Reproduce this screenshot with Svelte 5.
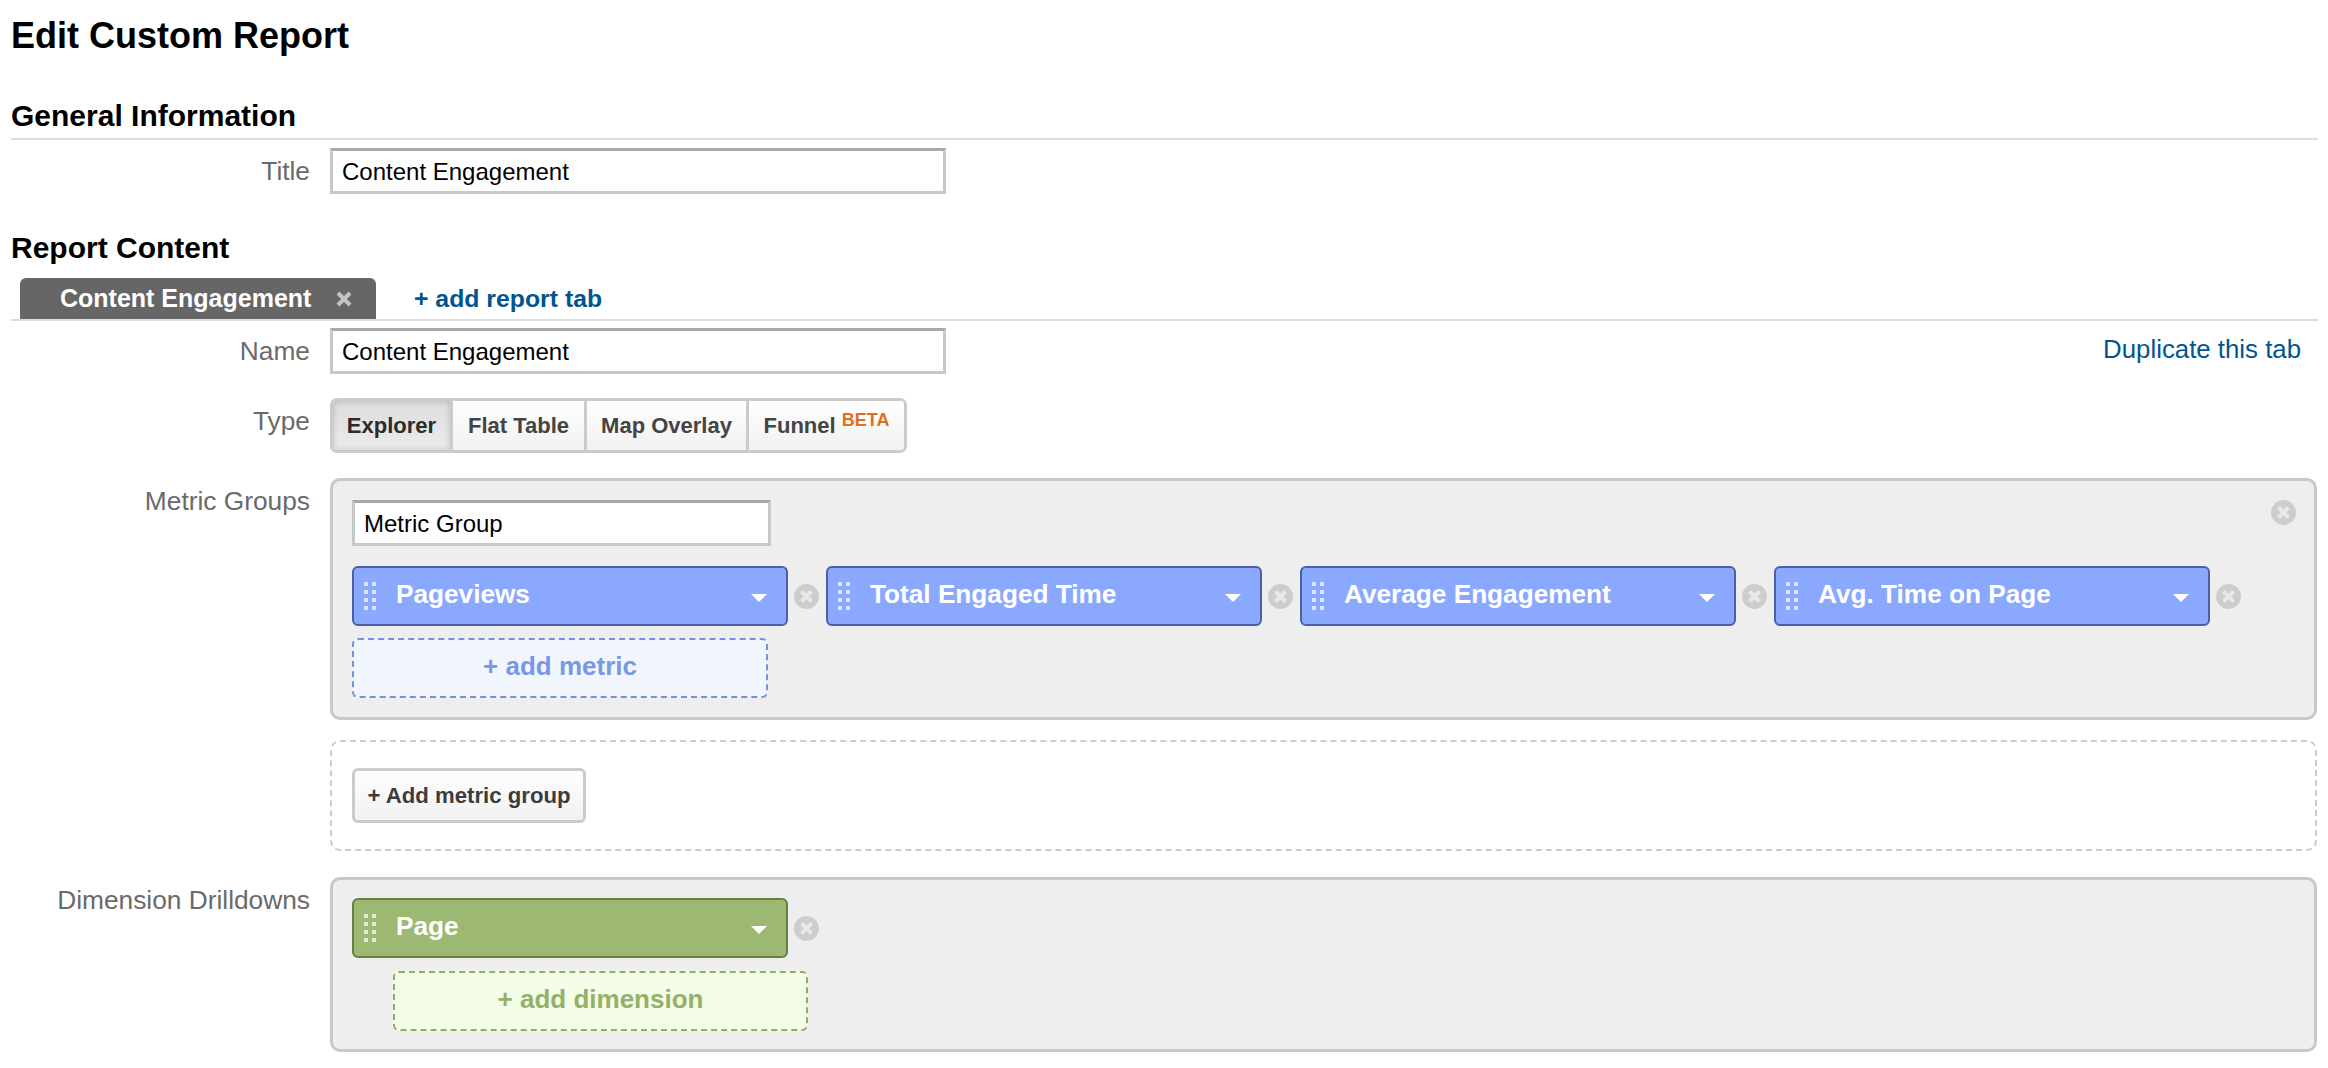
<script>
  const types = ['Explorer', 'Flat Table', 'Map Overlay'];
  const metrics = ['Pageviews', 'Total Engaged Time', 'Average Engagement', 'Avg. Time on Page'];
  // drag handle dots, 2 columns x 4 rows
  const dots = [];
  for (let r = 0; r < 4; r++) {
    for (let c = 0; c < 2; c++) dots.push({ x: c * 8, y: r * 8 });
  }
</script>

{#snippet closeIcon()}
  <svg class="close" width="25" height="25" viewBox="0 0 25 25">
    <circle cx="12.5" cy="12.5" r="12.5" fill="#cdcdcd" />
    <path d="M7.5 7.5l10 10M17.5 7.5l-10 10" stroke="#e8e8e8" stroke-width="4" />
  </svg>
{/snippet}

{#snippet pill(label, kind)}
  <div class="pill {kind}">
    <svg class="handle" width="12" height="28" viewBox="0 0 12 28">
      {#each dots as d}
        <rect x={d.x} y={d.y} width="4" height="4" fill="#fff" opacity="0.7" />
      {/each}
    </svg>
    <span class="pill-label">{label}</span>
    <svg class="caret" width="16" height="8" viewBox="0 0 16 8">
      <path d="M0 0h16l-8 8z" fill="#fff" />
    </svg>
  </div>
{/snippet}

<div class="page">
  <h1>Edit Custom Report</h1>

  <h2 class="general">General Information</h2>
  <div class="row title-row">
    <div class="label">Title</div>
    <div class="control"><input class="text" value="Content Engagement" readonly /></div>
  </div>

  <h2 class="content">Report Content</h2>
  <div class="tabs">
    <div class="tab">
      <span>Content Engagement</span>
      <svg width="16" height="16" viewBox="0 0 16 16">
        <path d="M2 2l12 12M14 2L2 14" stroke="#c4c4c4" stroke-width="4" />
      </svg>
    </div>
    <a class="add-tab" href="#add">+ add report tab</a>
  </div>

  <div class="row name-row">
    <div class="label">Name</div>
    <div class="control name-control">
      <input class="text" value="Content Engagement" readonly />
      <a class="duplicate" href="#dup">Duplicate this tab</a>
    </div>
  </div>

  <div class="row type-row">
    <div class="label">Type</div>
    <div class="control">
      <div class="segmented">
        {#each types as t, i}
          <button class="seg seg-{i}" class:active={i === 0}>{t}</button>
        {/each}
        <button class="seg seg-3">Funnel <sup>BETA</sup></button>
      </div>
    </div>
  </div>

  <div class="row metrics-row">
    <div class="label">Metric Groups</div>
    <div class="control">
      <div class="panel metric-panel">
        <span class="panel-close">{@render closeIcon()}</span>
        <input class="text group-name" value="Metric Group" readonly />
        <div class="pills">
          {#each metrics as m}
            {@render pill(m, 'blue')}
            {@render closeIcon()}
          {/each}
        </div>
        <div class="add add-metric">+ add metric</div>
      </div>
      <div class="dashed">
        <button class="add-group">+ Add metric group</button>
      </div>
    </div>
  </div>

  <div class="row dim-row">
    <div class="label">Dimension Drilldowns</div>
    <div class="control">
      <div class="panel dim-panel">
        <div class="pills">
          {@render pill('Page', 'green')}
          {@render closeIcon()}
        </div>
        <div class="add add-dim">+ add dimension</div>
      </div>
    </div>
  </div>
</div>

<style>
  :global(body) {
    margin: 0;
    background: #fff;
    overflow: hidden;
  }

  .page {
    box-sizing: border-box;
    width: 2328px;
    height: 1068px;
    padding: 14px 10px 0 11px;
    font-family: "Liberation Sans", Arial, sans-serif;
    color: #000;
  }

  h1 {
    margin: 0;
    font-size: 36px;
    line-height: 44px;
    font-weight: bold;
  }

  h2 {
    margin: 0;
    font-size: 30px;
    line-height: 40px;
    font-weight: bold;
  }

  .general {
    margin-top: 38px;
    padding-bottom: 2px;
    border-bottom: 2px solid #ddd;
  }

  .content {
    margin-top: 34px;
  }

  .row {
    display: grid;
    grid-template-columns: 299px 1fr;
    column-gap: 20px;
    margin-right: 1px;
  }

  .label {
    padding-top: 1px;
    text-align: right;
    font-size: 26.3px;
    line-height: 44px;
    color: #6a6a6a;
  }

  .title-row {
    margin-top: 8px;
  }

  .text {
    box-sizing: border-box;
    display: block;
    width: 616px;
    height: 46px;
    margin: 0;
    padding: 2px 9px 0;
    font-family: inherit;
    font-size: 24px;
    color: #000;
    background: #fff;
    border: 3px solid #c8c8c8;
    border-top-color: #a8a8a8;
    border-radius: 0;
    outline: none;
  }

  .tabs {
    display: flex;
    align-items: stretch;
    height: 41px;
    margin-top: 10px;
    padding-left: 9px;
    border-bottom: 2px solid #ddd;
  }

  .tab {
    display: flex;
    align-items: center;
    gap: 25px;
    box-sizing: border-box;
    width: 356px;
    padding-left: 40px;
    background: #666;
    color: #fff;
    font-size: 25px;
    font-weight: bold;
    border-radius: 6px 6px 0 0;
  }

  .add-tab {
    margin-left: 38px;
    font-size: 24.8px;
    line-height: 41px;
    font-weight: bold;
    color: #00558f;
    text-decoration: none;
  }

  .name-row {
    margin-top: 7px;
  }

  .name-control {
    display: flex;
    justify-content: space-between;
    align-items: flex-start;
  }

  .duplicate {
    margin-right: 16px;
    font-size: 25.8px;
    line-height: 42px;
    color: #00558f;
    text-decoration: none;
  }

  .type-row {
    margin-top: 24px;
  }

  .segmented {
    display: inline-flex;
    height: 55px;
    box-sizing: border-box;
    border: 3px solid #cbcbcb;
    border-radius: 7px;
    overflow: hidden;
  }

  .seg {
    box-sizing: border-box;
    height: 100%;
    padding: 0;
    border: 0;
    border-left: 3px solid #cbcbcb;
    background: linear-gradient(#fff, #f1f1f1);
    font-family: inherit;
    font-size: 22px;
    font-weight: bold;
    color: #444;
    white-space: nowrap;
  }

  .seg-0 { width: 117px; border-left: 0; }
  .seg-1 { width: 134px; }
  .seg-2 { width: 162px; }
  .seg-3 { width: 158px; }

  .active {
    background: linear-gradient(#dcdcdc, #ececec);
    box-shadow: inset 0 0 6px rgba(0, 0, 0, 0.18);
    color: #2b2b2b;
  }

  sup {
    font-size: 18px;
    line-height: 0;
    color: #e07020;
    vertical-align: 7px;
  }

  .metrics-row {
    margin-top: 25px;
  }

  .panel {
    position: relative;
    box-sizing: border-box;
    background: #eee;
    border: 3px solid #c8c8c8;
    border-radius: 10px;
    padding-left: 19px;
  }

  .metric-panel {
    height: 242px;
    padding-top: 19px;
  }

  .panel-close {
    position: absolute;
    top: 19px;
    right: 18px;
  }

  .group-name {
    width: 419px;
  }

  .pills {
    display: flex;
    align-items: center;
    gap: 6px;
  }

  .metric-panel .pills {
    margin-top: 20px;
  }

  .close {
    display: block;
    flex: none;
    margin-right: 1px;
  }

  .panel-close .close {
    margin-right: 0;
  }

  .pill {
    display: flex;
    align-items: center;
    box-sizing: border-box;
    width: 436px;
    height: 60px;
    padding: 0 19px 0 10px;
    border: 2px solid #4a5fa5;
    border-radius: 6px;
    color: #fff;
    font-size: 26.2px;
    font-weight: bold;
  }

  .blue {
    background: #8ba8ff;
  }

  .green {
    background: #9db873;
    border-color: #66803f;
  }

  .handle {
    flex: none;
  }

  .pill-label {
    flex: 1;
    margin-left: 20px;
    margin-top: -4px;
  }

  .caret {
    flex: none;
    margin-top: 4px;
  }

  .add {
    display: flex;
    align-items: center;
    justify-content: center;
    box-sizing: border-box;
    height: 60px;
    padding-bottom: 4px;
    border-radius: 6px;
    font-size: 26px;
    font-weight: bold;
  }

  .add-metric {
    width: 416px;
    margin-top: 12px;
    background: #f1f6fd;
    border: 2px dashed #7a8ee0;
    color: #7a97e6;
  }

  .dashed {
    box-sizing: border-box;
    height: 111px;
    margin-top: 20px;
    padding: 26px 20px;
    border: 2px dashed #ccc;
    border-radius: 10px;
  }

  .add-group {
    display: block;
    box-sizing: border-box;
    width: 234px;
    height: 55px;
    padding: 0;
    border: 3px solid #cbcbcb;
    border-radius: 6px;
    background: linear-gradient(#fff, #f1f1f1);
    font-family: inherit;
    font-size: 22.2px;
    font-weight: bold;
    color: #3c3c3c;
  }

  .dim-row {
    margin-top: 26px;
  }

  .dim-panel {
    height: 175px;
    padding-top: 18px;
  }

  .add-dim {
    width: 415px;
    margin: 13px 0 0 41px;
    background: #f4fde8;
    border: 2px dashed #8fae60;
    color: #95b068;
  }
</style>
